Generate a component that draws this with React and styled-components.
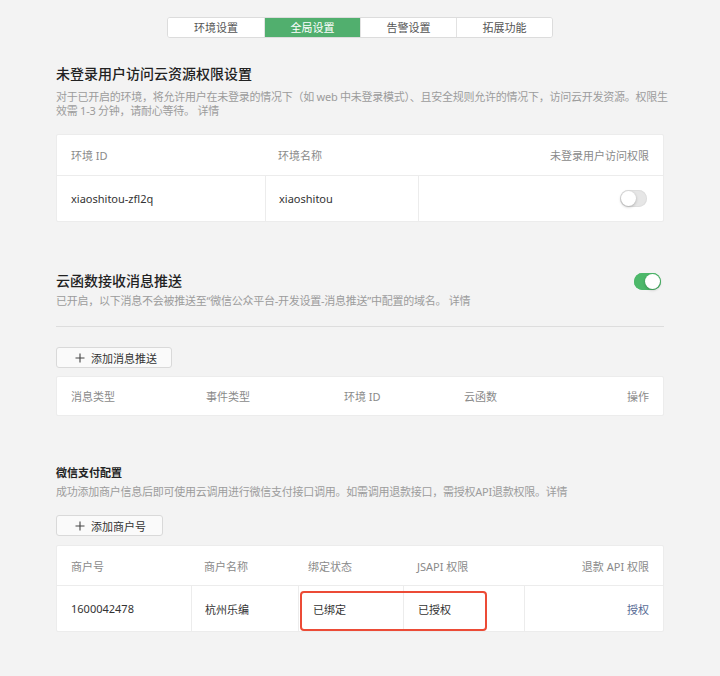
import React from "react";
import styled, { createGlobalStyle } from "styled-components";

const Global = createGlobalStyle`
  html, body { margin: 0; padding: 0; background: #f3f3f3; }
  body { font-family: "Noto Sans", "Noto Sans CJK SC", sans-serif; color: #333; }
  * { box-sizing: border-box; }
`;

const Page = styled.div`
  width: 608px;
  margin: 0 auto;
  padding: 17px 0 44px;
`;

const Tabs = styled.div`
  width: 386px;
  margin: 0 auto;
  display: grid;
  grid-template-columns: repeat(4, 1fr);
  border: 1px solid #dcdcdc;
  border-radius: 3px;
  background: #fff;
  overflow: hidden;
`;

const Tab = styled.div`
  height: 19px;
  line-height: 19px;
  text-align: center;
  font-size: 11px;
  color: ${(p) => (p.$active ? "#fff" : "#555")};
  background: ${(p) => (p.$active ? "#51af6e" : "#fff")};
  border-left: ${(p) => (p.$first ? "none" : "1px solid #e2e2e2")};
`;

const TitleRow = styled.div`
  display: flex;
  align-items: center;
  justify-content: space-between;
  margin-top: ${(p) => p.$mt || 0}px;
  padding-right: 3px;
`;

const Title = styled.h2`
  margin: 0;
  font-size: 14px;
  line-height: 20px;
  font-weight: 500;
  color: #222;
`;

const SubTitle = styled.h3`
  margin: 0;
  font-size: 11px;
  line-height: 16px;
  font-weight: 700;
  color: #222;
  margin-top: ${(p) => p.$mt || 0}px;
`;

const Desc = styled.p`
  margin: ${(p) => p.$mt || 0}px 0 0;
  font-size: 11px;
  line-height: 14px;
  color: #9c9c9c;
  letter-spacing: -0.25px;
  white-space: nowrap;
`;

const Switch = styled.div`
  position: relative;
  width: 27px;
  height: 17px;
  border-radius: 9px;
  background: ${(p) => (p.$on ? "#4db86a" : "#e6e6e6")};
  box-shadow: inset 0 0 0 1px ${(p) => (p.$on ? "#4db86a" : "#dedede")};
`;

const Knob = styled.span`
  position: absolute;
  top: 1px;
  left: ${(p) => (p.$on ? "11px" : "1px")};
  width: 15px;
  height: 15px;
  border-radius: 50%;
  background: #fff;
  box-shadow: 0 1px 3px rgba(0, 0, 0, 0.25);
`;

const Panel = styled.div`
  position: relative;
  margin-top: ${(p) => p.$mt || 0}px;
  background: #fff;
  border: 1px solid #ececec;
  border-radius: 2px;
`;

const Row = styled.div`
  display: grid;
  grid-template-columns: ${(p) => p.$cols};
  height: ${(p) => p.$h}px;
  border-top: ${(p) => (p.$body ? "1px solid #ececec" : "none")};
`;

const Cell = styled.div`
  display: flex;
  align-items: center;
  justify-content: ${(p) => (p.$right ? "flex-end" : "flex-start")};
  padding: 0 ${(p) => (p.$pr != null ? p.$pr : 14)}px 0 ${(p) => (p.$pl != null ? p.$pl : 14)}px;
  font-size: 11px;
  color: ${(p) => (p.$head ? "#8a8a8a" : p.$link ? "#576b95" : "#333")};
  border-left: ${(p) => (p.$divider ? "1px solid #ececec" : "none")};
  white-space: nowrap;
`;

const Divider = styled.hr`
  margin: 18px 0 0;
  border: none;
  border-top: 1px solid #dddddd;
`;

const Button = styled.button`
  display: flex;
  align-items: center;
  gap: 6px;
  margin-top: ${(p) => p.$mt || 0}px;
  width: ${(p) => p.$w}px;
  height: 21px;
  padding: 0 0 0 18px;
  background: #fafafa;
  border: 1px solid #d9d9d9;
  border-radius: 3px;
  font-family: inherit;
  font-size: 11px;
  color: #333;
`;

const Highlight = styled.div`
  position: absolute;
  left: 243px;
  top: 45px;
  width: 187px;
  height: 40px;
  border: 2px solid #ec4b36;
  border-radius: 4px;
  pointer-events: none;
`;

const Plus = () => (
  <svg width="10" height="10" viewBox="0 0 10 10">
    <path d="M5 0.5V9.5M0.5 5H9.5" stroke="#444" strokeWidth="1.1" />
  </svg>
);

const Toggle = ({ on }) => (
  <Switch $on={on}>
    <Knob $on={on} />
  </Switch>
);

export default function App() {
  const c1 = "208px 153px 1fr";
  const c2 = "135px 138px 120px 1fr 1fr";
  const c3 = "134px 107px 105px 121px 1fr";
  return (
    <>
      <Global />
      <Page>
        <Tabs>
          <Tab $first>环境设置</Tab>
          <Tab $active>全局设置</Tab>
          <Tab>告警设置</Tab>
          <Tab>拓展功能</Tab>
        </Tabs>

        <TitleRow $mt={26}>
          <Title>未登录用户访问云资源权限设置</Title>
        </TitleRow>
        <Desc $mt={6}>
          对于已开启的环境，将允许用户在未登录的情况下（如 web 中未登录模式）、且安全规则允许的情况下，访问云开发资源。权限生
          <br />
          效需 1-3 分钟，请耐心等待。 详情
        </Desc>

        <Panel $mt={16}>
          <Row $cols={c1} $h={40}>
            <Cell $head>环境 ID</Cell>
            <Cell $head $pl={13}>环境名称</Cell>
            <Cell $head $right>未登录用户访问权限</Cell>
          </Row>
          <Row $cols={c1} $h={46} $body>
            <Cell>xiaoshitou-zfl2q</Cell>
            <Cell $divider $pl={13}>xiaoshitou</Cell>
            <Cell $divider $right $pr={16}>
              <Toggle on={false} />
            </Cell>
          </Row>
        </Panel>

        <TitleRow $mt={49}>
          <Title>云函数接收消息推送</Title>
          <Toggle on />
        </TitleRow>
        <Desc $mt={3}>已开启，以下消息不会被推送至“微信公众平台-开发设置-消息推送”中配置的域名。 详情</Desc>
        <Divider />

        <Button $mt={20} $w={116}>
          <Plus />
          添加消息推送
        </Button>

        <Panel $mt={8}>
          <Row $cols={c2} $h={38}>
            <Cell $head>消息类型</Cell>
            <Cell $head>事件类型</Cell>
            <Cell $head>环境 ID</Cell>
            <Cell $head>云函数</Cell>
            <Cell $head $right>操作</Cell>
          </Row>
        </Panel>

        <SubTitle $mt={49}>微信支付配置</SubTitle>
        <Desc $mt={4}>成功添加商户信息后即可使用云调用进行微信支付接口调用。如需调用退款接口，需授权API退款权限。详情</Desc>

        <Button $mt={16} $w={107}>
          <Plus />
          添加商户号
        </Button>

        <Panel $mt={9}>
          <Row $cols={c3} $h={39}>
            <Cell $head>商户号</Cell>
            <Cell $head $pl={13}>商户名称</Cell>
            <Cell $head $pl={10}>绑定状态</Cell>
            <Cell $head>JSAPI 权限</Cell>
            <Cell $head $right>退款 API 权限</Cell>
          </Row>
          <Row $cols={c3} $h={46} $body>
            <Cell>1600042478</Cell>
            <Cell $divider $pl={13}>杭州乐编</Cell>
            <Cell $divider>已绑定</Cell>
            <Cell $divider>已授权</Cell>
            <Cell $divider $right $link>授权</Cell>
          </Row>
          <Highlight />
        </Panel>
      </Page>
    </>
  );
}
